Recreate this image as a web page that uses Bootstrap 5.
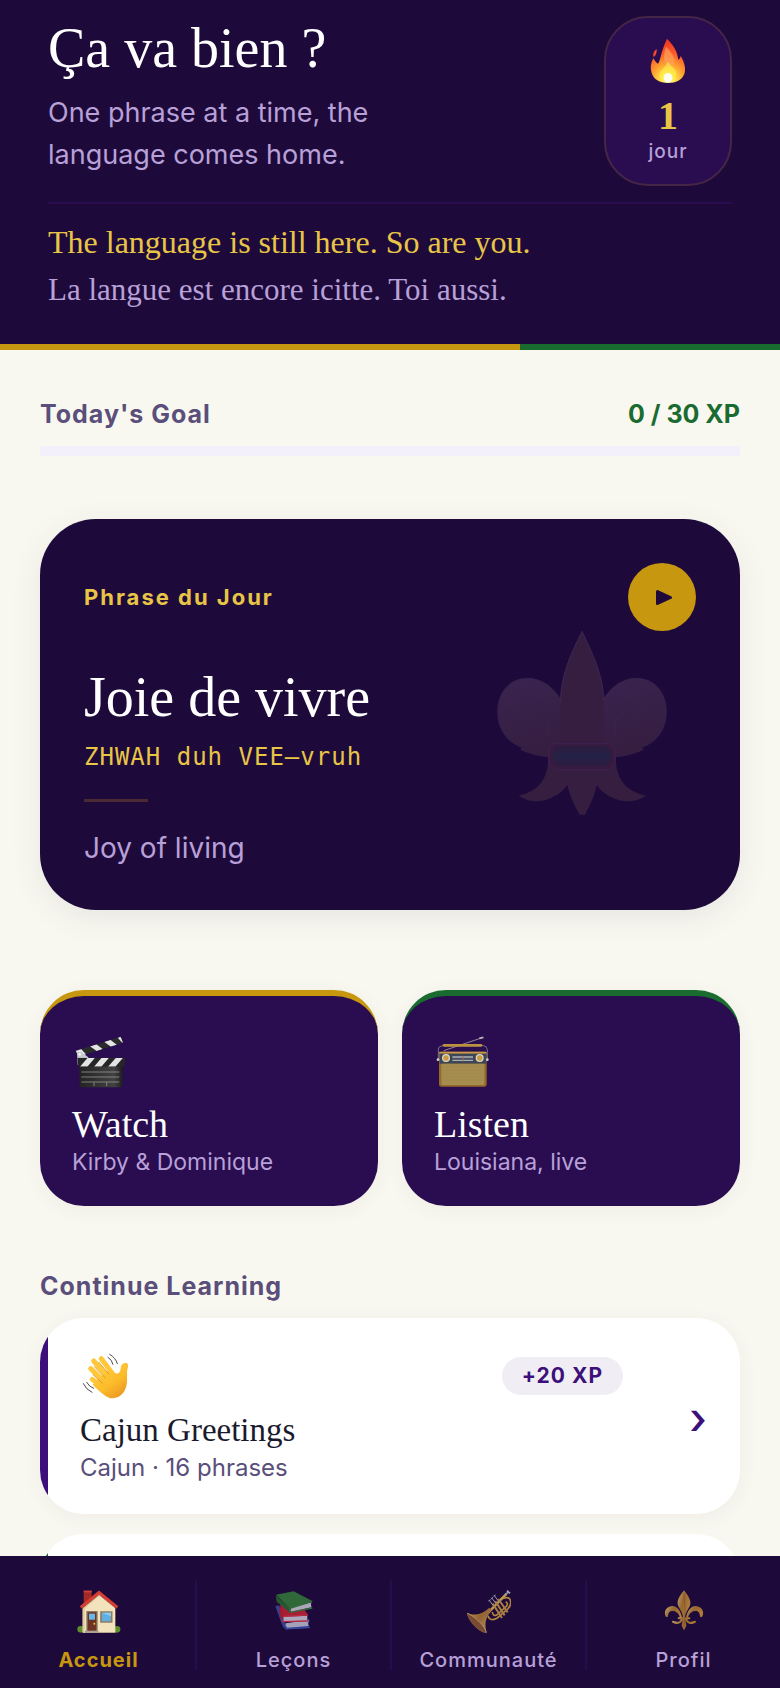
<!DOCTYPE html>
<html lang="en">
<head>
<meta charset="utf-8">
<meta name="viewport" content="width=device-width, initial-scale=1">
<title>Ça va bien ?</title>
<link href="https://cdn.jsdelivr.net/npm/bootstrap@5.3.0/dist/css/bootstrap.min.css" rel="stylesheet">
<style>
:root{--night:#1e0a3a;--plum:#290d50;--lilac:#b8a0d8;--sun:#e8c547;--gold:#c6970f;--leaf:#1a6b30;--cream:#f9f8f0;--muted:#5a4e7a;--violet:#3d0f7a}
body{background:var(--cream);font-family:Inter,"Liberation Sans",sans-serif}
a{text-decoration:none}
svg{display:block}
.serif{font-family:"Liberation Serif",serif}
.scroller{min-height:0;scrollbar-width:none}
.hero{background:var(--night);padding:16px 48px 34px}
.display-line{font-size:56px;line-height:64px;color:#fff;font-weight:400;margin:0}
.intro{font-size:27px;line-height:42px;color:var(--lilac);max-width:360px;margin:12px 0 0}
.streak{width:128px;height:170px;border:2px solid #452646;border-radius:44px;background:var(--plum);padding-top:20px}
.streak-count{font-size:40px;line-height:40px;color:var(--sun);font-weight:700;margin-top:12px}
.streak-unit{font-size:19px;line-height:24px;color:var(--lilac);font-weight:500;letter-spacing:1px;margin-top:4px}
.creed{border-top:2px solid var(--plum);margin-top:16px;padding-top:18px;line-height:40px}
.creed-en{font-size:32px;color:var(--sun);margin:0 0 8px}
.creed-fr{font-size:31px;color:var(--lilac);margin:0}
.stripe{height:6px}
.stripe-gold{flex:2;background:var(--gold)}
.stripe-green{flex:1;background:var(--leaf)}
.content{padding:48px 40px 0}
.heading{font-size:25px;line-height:32px;font-weight:700;letter-spacing:1px;color:var(--muted);margin:0}
.xp-total{font-size:25px;line-height:32px;font-weight:700;color:var(--leaf)}
.goal-bar{height:10px;border-radius:2px;background:#f3effb;margin-top:16px;--bs-progress-bar-bg:var(--leaf)}
.phrase{background:var(--night);border-radius:56px;margin-top:63px;padding:44px 44px 42px;box-shadow:0 8px 32px rgba(30,10,58,.08)}
.eyebrow{font-size:22px;line-height:32px;font-weight:700;letter-spacing:2px;color:var(--sun);margin:0}
.play{width:68px;height:68px;border:0;border-radius:50%;background:var(--gold);padding:0}
.phrase-title{margin-top:34px}
.say{font-family:"DejaVu Sans Mono",monospace;font-size:24px;line-height:32px;letter-spacing:1px;color:var(--sun);margin:12px 0 26px}
.dash{width:64px;height:3px;background:#4a2932;margin-bottom:26px}
.meaning{font-size:28px;line-height:40px;color:var(--lilac);margin:0}
.crest{position:absolute;right:73px;top:112px}
.tiles{gap:24px;margin-top:80px;margin-bottom:64px}
.tile{flex:1 1 0;background:var(--plum);border-top:6px solid var(--gold);border-radius:44px;padding:40px 32px 28px;box-shadow:0 4px 20px rgba(30,10,58,.05)}
.tile-green{border-top-color:var(--leaf)}
.tile-title{font-size:38px;line-height:40px;color:#fff;margin:16px 0 0;font-weight:400}
.detail{font-size:24px;line-height:32px;color:var(--muted);margin:2px 0 0}
.tile .detail{font-size:23px;color:var(--lilac)}
.lesson{background:#fff;border-radius:44px;padding:34px 26px 30px 40px;overflow:hidden;margin-top:16px;position:relative}
.lesson-wrap{border-radius:44px;box-shadow:0 4px 20px rgba(30,10,58,.05)}
.lesson::before{content:"";position:absolute;left:0;top:0;bottom:0;width:8px;background:var(--violet)}
.lesson-green::before{background:var(--leaf)}
.lesson-green{min-height:196px;margin-top:20px}
.lesson-title{font-size:33px;line-height:40px;color:#1a1a2e;margin:10px 0 0;font-weight:400}
.pill{background:#f0eef4;color:var(--violet);border-radius:19px;font-size:21px;line-height:38px;font-weight:700;letter-spacing:1px;padding:0 20px}
.go{font-size:44px;line-height:48px;color:var(--violet);font-weight:500;width:32px;text-align:center;margin-left:59px}
.tabs{background:var(--night);padding:24px 0 18px}
.tab{flex:1 1 0;color:var(--lilac);font-size:20px;line-height:24px;font-weight:500;letter-spacing:1px;padding:8px 0 0;height:90px;border-left:2px solid #270d4c}
.tab:first-child{border-left-color:transparent}
.tab svg{margin:0 auto 14px;opacity:.8}
.tab.active{color:var(--gold);font-weight:700}
.tab.active svg{opacity:1}
</style>
</head>
<body>
<div class="vh-100 d-flex flex-column overflow-hidden">
<div class="scroller flex-grow-1 overflow-auto">
<header>
 <div class="hero">
  <div class="d-flex justify-content-between align-items-start">
   <div>
    <h1 class="serif display-line">Ça va bien ?</h1>
    <p class="intro">One phrase at a time, the language comes home.</p>
   </div>
   <div class="streak text-center flex-shrink-0">
    <svg class="mx-auto" width="44" height="46" viewBox="198 114 132 138" aria-hidden="true">
     <defs><radialGradient id="fl" gradientUnits="userSpaceOnUse" cx="264" cy="240" r="116"><stop offset="0" stop-color="#fffde0"/><stop offset=".16" stop-color="#ffe94f"/><stop offset=".42" stop-color="#fda02e"/><stop offset=".7" stop-color="#fb5a2c"/><stop offset="1" stop-color="#f2381f"/></radialGradient></defs>
     <path fill="url(#fl)" d="M261 116C279 134 293 154 295 180C299 176 302 172 302 167C312 184 319 204 313 222C306 240 288 249 264 249C238 249 221 238 215 219C210 204 212 188 220 175C225 182 228 188 234 191C242 181 243 154 261 116Z"/>
     <path fill="#f04a2c" d="M230 147C231 158 228 167 221 171C217 162 222 153 230 147Z"/>
     <path fill="#fda35a" opacity=".7" d="M258 140C272 154 284 168 284 190C280 200 270 204 262 196C250 190 250 160 258 140Z"/>
     <path fill="#fff04d" opacity=".65" d="M263 186C274 200 292 208 288 226C281 239 272 243 264 243C249 243 238 236 239 222C243 208 258 201 263 186Z"/>
     <ellipse fill="#fffdf0" cx="264" cy="233" rx="13" ry="14"/>
    </svg>
    <div class="serif streak-count">1</div>
    <div class="streak-unit">jour</div>
   </div>
  </div>
  <div class="serif creed">
   <p class="creed-en">The language is still here. So are you.</p>
   <p class="creed-fr" lang="fr">La langue est encore icitte. Toi aussi.</p>
  </div>
 </div>
 <div class="stripe d-flex"><div class="stripe-gold"></div><div class="stripe-green"></div></div>
</header>

<main class="content">
 <section>
  <div class="d-flex justify-content-between">
   <h2 class="heading">Today's Goal</h2>
   <span class="xp-total">0 / 30 XP</span>
  </div>
  <div class="progress goal-bar" role="progressbar" aria-label="Today's Goal" aria-valuenow="0" aria-valuemin="0" aria-valuemax="30"><div class="progress-bar" style="width:0%"></div></div>
 </section>

 <section class="phrase position-relative">
  <svg class="crest" width="170" height="184" viewBox="51 276 510 552" aria-hidden="true">
   <defs>
    <linearGradient id="wing" x1="0" y1="0" x2=".3" y2="1"><stop stop-color="#3a2450"/><stop offset="1" stop-color="#351e40"/></linearGradient>
    <linearGradient id="belt" y2="1" x2="0"><stop stop-color="#2b1c3f"/><stop offset=".5" stop-color="#242246"/><stop offset="1" stop-color="#2b1c40"/></linearGradient>
   </defs>
   <g fill="url(#wing)" stroke="#3a2450" stroke-width="2">
    <path d="M242 480C216 442 184 418 142 418C88 418 53 462 53 517C53 572 82 611 130 626L122 631C150 645 180 652 214 654L306 640V480Z"/>
    <path d="M370 480C396 442 428 418 470 418C524 418 559 462 559 517C559 572 530 611 482 626L490 631C462 645 432 652 398 654L306 640V480Z"/>
   </g>
   <g fill="#351e40">
    <path d="M205 650H407C407 717 432 755 498 770C446 805 379 780 350 738C343 775 328 802 315 827H299C285 802 270 775 262 738C233 780 166 805 116 770C180 755 205 717 205 650Z"/>
    <path d="M306 277C335 340 370 405 371 485V640H241V485C243 405 275 340 306 277Z"/>
   </g>
   <path d="M241 490C243 405 275 340 306 277C335 340 370 405 371 485" fill="none" stroke="#3d2751" stroke-width="3"/>
   <g fill="none" stroke="#3d2548" stroke-width="3"><path d="M138 535Q150 518 160 534M201 545Q210 565 203 588M408 590C396 550 410 525 434 518M450 532Q467 520 476 542"/></g>
   <rect x="207" y="613" width="198" height="79" rx="26" fill="#371a40" stroke="#3f224e" stroke-width="3"/>
   <rect x="219" y="621" width="174" height="60" rx="24" fill="url(#belt)"/>
  </svg>
  <div class="d-flex justify-content-between align-items-center">
   <h2 class="eyebrow" lang="fr">Phrase du Jour</h2>
   <button class="play" type="button" aria-label="Play"><svg width="68" height="68" viewBox="0 0 68 68" aria-hidden="true"><path d="M29.500 28.500L42.500 34.500L29.500 40.500Z" fill="#1e0a3a" stroke="#1e0a3a" stroke-width="3" stroke-linejoin="round"/></svg></button>
  </div>
  <p class="serif display-line phrase-title" lang="fr">Joie de vivre</p>
  <p class="say">ZHWAH duh VEE–vruh</p>
  <div class="dash"></div>
  <p class="meaning">Joy of living</p>
 </section>

 <section class="d-flex tiles">
  <a class="tile" href="#watch">
   <svg width="56" height="52" viewBox="126 199 168 156" aria-hidden="true">
    <defs><clipPath id="c1"><path d="M136 244L272 201L279 219L144 261Z"/></clipPath><clipPath id="c2"><path d="M142 264H286L283 291H145Z"/></clipPath>
    <linearGradient id="cb" x2="1"><stop stop-color="#222"/><stop offset=".8" stop-color="#424242"/><stop offset="1" stop-color="#1b1b1b"/></linearGradient></defs>
    <path d="M147 288H279L277 348Q277 353 270 353H155Q149 353 149 347Z" fill="url(#cb)"/>
    <g clip-path="url(#c1)"><path fill="#2b2b2b" d="M130 195H290V270H130Z"/><path fill="#e2e4e6" d="M134 238L150 234L170 256L148 264ZM180 230L199 224L219 239L201 245ZM222 216L241 210L262 227L244 232ZM263 204L271 201L285 217L277 219Z"/></g>
    <path d="M141 247L155 248L175 263L172 282L143 286Z" fill="#c6ccd0"/><circle cx="149" cy="254" r="4" fill="#f4f4f4"/>
    <g clip-path="url(#c2)"><path fill="#262626" d="M140 260H290V295H140Z"/><path fill="#e2e4e6" d="M173 264H195L172 291H150ZM215 264H237L214 291H192ZM258 264H279L256 291H234Z"/></g>
    <path stroke="#aaa" stroke-width="2" fill="none" d="M154 307H268M154 322H268M154 337H268M192 338V349M230 338V349"/>
   </svg>
   <h3 class="serif tile-title">Watch</h3>
   <p class="detail">Kirby &amp; Dominique</p>
  </a>
  <a class="tile tile-green" href="#listen">
   <svg width="56" height="52" viewBox="132 199 168 156" aria-hidden="true">
    <path d="M161 243L280 203" stroke="#8b8791" stroke-width="3"/><path d="M268 206L280 203" stroke="#b8b4b8" stroke-width="5"/>
    <path d="M145 268V238Q146 229 158 228H280Q291 229 292 240V268" fill="none" stroke="#77738a" stroke-width="3"/>
    <path d="M162 227H273" stroke="#bd9140" stroke-width="8" stroke-linecap="round"/>
    <rect x="147" y="246" width="143" height="105" rx="8" fill="#96682a"/><rect x="147" y="246" width="143" height="6" rx="3" fill="#c99b48"/>
    <rect x="149" y="252" width="139" height="30" fill="#3c4657"/>
    <rect x="154" y="282" width="129" height="64" rx="3" fill="#a58d4f"/>
    <path d="M156 292H281M156 302H281M156 312H281M156 322H281M156 332H281" stroke="#9e8649" stroke-width="1"/>
    <path d="M187 262H249M187 272H249" stroke="#afb1b5" stroke-width="4"/><path d="M187 267H249" stroke="#555f6b" stroke-width="2"/><path d="M220 258V276" stroke="#b8654c" stroke-width="2"/>
    <g fill="#c69c45" stroke="#ded6c2" stroke-width="4"><circle cx="168" cy="265" r="10"/><circle cx="269" cy="265" r="10"/></g>
    <circle cx="144" cy="270" r="4" fill="#c7d2df"/><circle cx="292" cy="270" r="4" fill="#c7d2df"/>
   </svg>
   <h3 class="serif tile-title">Listen</h3>
   <p class="detail">Louisiana, live</p>
  </a>
 </section>

 <section>
  <h2 class="heading">Continue Learning</h2>
  <div class="lesson-wrap">
  <a class="lesson d-flex align-items-center" href="#greetings">
   <div class="flex-grow-1">
    <div class="d-flex justify-content-between align-items-center">
     <svg width="50" height="48" viewBox="150 306 150 144" aria-hidden="true">
      <defs><linearGradient id="hd" x1="0" y1="0" x2=".7" y2="1"><stop stop-color="#ffd149"/><stop offset=".65" stop-color="#fcbc2a"/><stop offset="1" stop-color="#eb9922"/></linearGradient></defs>
      <g fill="none" stroke="#ffc83a" stroke-width="15" stroke-linecap="round"><path d="M214 326L246 369M191 333L231 378M182 356L220 392M187 388L218 413"/></g>
      <path fill="url(#hd)" d="M205 384L243 356Q257 374 264 370Q272 366 272 353Q274 339 287 338Q296 339 294 350C289 367 292 379 291 397C288 426 272 444 248 445C229 445 211 426 188 404Z"/>
      <g fill="none" stroke="#e29b25" stroke-width="3" stroke-linecap="round"><path d="M207 337L236 372M193 350L226 384M189 374L218 400"/></g>
      <path d="M246 438Q282 431 284 398" stroke="#f2a126" stroke-width="5" fill="none" opacity=".6"/>
      <g fill="none" stroke="#4c4c50" stroke-width="3" stroke-linecap="round"><path d="M239 313Q257 323 262 341M234 322Q246 329 249 343M160 401Q168 419 186 427M170 397Q177 410 191 415"/></g>
     </svg>
     <span class="pill">+20 XP</span>
    </div>
    <h3 class="serif lesson-title">Cajun Greetings</h3>
    <p class="detail">Cajun · 16 phrases</p>
   </div>
   <span class="go" aria-hidden="true">›</span>
  </a>
  </div>
  <div class="lesson lesson-green"></div>
 </section>
</main>
</div>

<nav class="tabs d-flex flex-shrink-0 text-center" aria-label="Main" lang="fr">
 <a class="tab active" href="#accueil" aria-current="page">
  <svg width="44" height="46" viewBox="226 143 132 138" aria-hidden="true">
   <path fill="#a32b27" d="M246 151H270V180L246 200Z"/><path fill="#c94439" d="M246 151H270V156H246Z"/>
   <ellipse cx="237" cy="267" rx="10" ry="10" fill="#5d8e2c"/><ellipse cx="346" cy="267" rx="10" ry="10" fill="#5d8e2c"/>
   <path fill="#f3e3bd" d="M292 160L341 199V277H243V199Z"/><path fill="#e0cb9f" d="M243 199L292 160V168L249 205V277H243Z"/>
   <path fill="none" stroke="#d73c31" stroke-width="9" d="M237 201L292 156L347 201"/><path fill="none" stroke="#8f2320" stroke-width="2" d="M240 205L292 163L344 205"/>
   <path fill="#6c3423" stroke="#8d7c63" stroke-width="4" d="M256 214H286V274H256Z"/><path fill="#69b6e8" d="M262 220H280V238H262Z"/><circle cx="278" cy="250" r="3" fill="#f6c541"/>
   <path fill="#61aee0" stroke="#8d7c63" stroke-width="5" d="M298 215H330V245H298Z"/><path d="M300 217L328 228V217Z" fill="#8acbf0"/>
   <path fill="#aaa196" d="M250 271H291V278H250Z"/><path fill="#b9a98b" d="M291 275H341V278H291Z"/>
  </svg>Accueil</a>
 <a class="tab" href="#lecons">
  <svg width="44" height="46" viewBox="810 143 132 138" aria-hidden="true">
   <path fill="#324fa8" d="M820 198L831 195L850 250L922 236L922 241Q918 249 923 262L851 267Q843 263 839 250Z"/><path fill="#c9c7dc" d="M851 249L920 240Q916 251 920 257L856 262Q849 257 851 249Z"/><path d="M851 266L924 262" stroke="#405abc" stroke-width="3"/>
   <path fill="#cb2433" d="M834 193L898 194L918 223L843 232Z"/><path fill="#d2cfdc" d="M844 229L916 226V241L845 243Z"/><path fill="none" stroke="#dd3443" stroke-width="4" d="M918 224L843 228Q834 237 843 244L918 242"/><path fill="#c4202d" d="M833 195L845 226L839 240L832 216Z"/>
   <path fill="#36803a" d="M822 163L875 153L931 182L864 205Z"/><path fill="#cfcfd8" d="M866 203L928 186Q925 196 929 201L866 214Z"/><path fill="#286b30" d="M821 165L864 204V217L824 184Z"/><path fill="none" stroke="#35843c" stroke-width="4" d="M931 183L866 203Q860 210 866 216L931 203"/>
  </svg>Leçons</a>
 <a class="tab" href="#communaute">
  <svg width="44" height="46" viewBox="225 143 132 138" aria-hidden="true">
   <defs><linearGradient id="tb" x1="0" y1="0" x2="1" y2="1"><stop stop-color="#f0be4c"/><stop offset=".45" stop-color="#b07a33"/><stop offset="1" stop-color="#e4bd76"/></linearGradient></defs>
   <g fill="none" stroke="#d6a340" stroke-width="5"><path d="M288 226C292 239 303 241 316 233L348 205C360 193 359 171 343 172L325 176M301 215Q303 229 314 224L344 197Q349 188 341 184"/></g>
   <path stroke="#e8bd51" stroke-width="7" d="M278 228L344 160"/><path stroke="#a8b9c9" stroke-width="5" d="M339 164L350 154"/><path stroke="#c6d3dc" stroke-width="5" d="M345 151L354 159"/>
   <path fill="url(#tb)" d="M226 218C247 228 270 222 292 202L299 209C279 234 278 252 283 277C267 281 225 241 226 218Z"/><path fill="#8e5d32" d="M226 219C246 226 281 258 283 277C264 279 227 242 226 219Z"/><path fill="none" stroke="#ddb171" stroke-width="3" d="M226 219C246 226 281 258 283 277"/>
   <g stroke="#cb9a46" stroke-width="6"><path d="M302 190L330 233M310 183L338 225M319 176L347 216"/></g><path stroke="#b5bec8" stroke-width="3" d="M292 180L303 195M299 173L311 188M307 166L320 183M289 182L296 178M297 175L303 171M304 168L311 164"/>
  </svg>Communauté</a>
 <a class="tab" href="#profil">
  <svg width="44" height="46" viewBox="811 143 132 138" aria-hidden="true">
   <defs><linearGradient id="fd" x2="1" y2=".5"><stop stop-color="#f0cd82"/><stop offset=".5" stop-color="#b57c2e"/><stop offset="1" stop-color="#d59a3c"/></linearGradient></defs>
   <g fill="url(#fd)">
   <path d="M877 150C887 163 898 177 896 191C894 203 881 214 880 232H874C873 214 860 203 858 191C856 177 867 163 877 150Z"/>
   <path d="M871 231C865 205 850 192 833 199C820 204 816 218 823 230L829 229C829 217 835 210 844 212C858 214 864 223 865 236Z"/>
   <path d="M883 231C889 205 904 192 921 199C934 204 938 218 931 230L925 229C925 217 919 210 910 212C896 214 890 223 889 236Z"/>
   <path d="M867 234H873C873 250 855 257 841 246L842 241L851 243C861 247 867 243 867 234ZM887 234H881C881 250 899 257 913 246L912 241L903 243C893 247 887 243 887 234ZM873 236H881L884 256L877 270L870 256Z"/>
   <rect x="858" y="231" width="38" height="6" rx="3"/></g>
   <path d="M877 160L880 210L877 263" stroke="#80501d" stroke-width="2" fill="none" opacity=".7"/>
  </svg>Profil</a>
</nav>
</div>
<script src="https://cdn.jsdelivr.net/npm/bootstrap@5.3.0/dist/js/bootstrap.bundle.min.js"></script>
</body>
</html>
